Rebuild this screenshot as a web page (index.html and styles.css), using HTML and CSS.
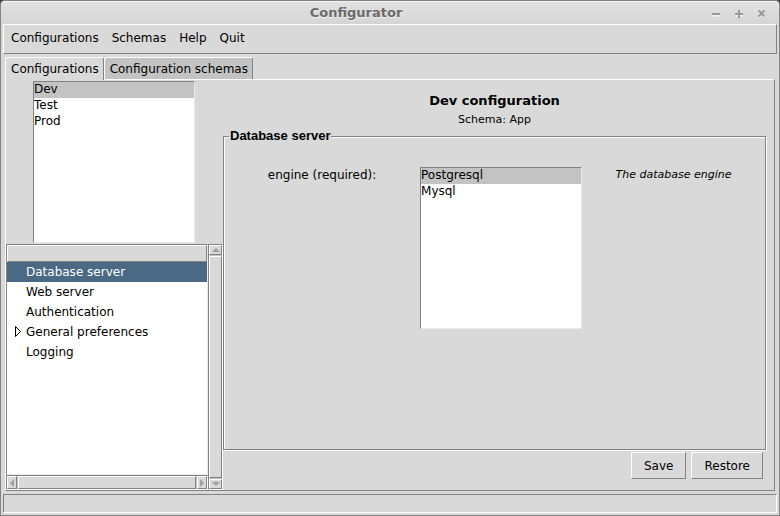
FILE: index.html
```html
<!DOCTYPE html>
<html lang="en">
<head>
<meta charset="utf-8">
<title>Configurator</title>
<link rel="stylesheet" href="styles.css">
</head>
<body>
<div class="window">
  <header class="titlebar">
    <h1 class="window-title">Configurator</h1>
    <div class="window-controls">
      <button type="button" class="window-button" aria-label="Minimize"><svg width="9" height="9" viewBox="0 0 9 9"><path class="glint" d="M1 6.5h8"/><path class="mark" d="M1 5h8"/></svg></button>
      <button type="button" class="window-button" aria-label="Maximize"><svg width="9" height="9" viewBox="0 0 9 9"><path class="glint" d="M1 6.5h8M5 2v7"/><path class="mark" d="M1 5h8M5 1v8"/></svg></button>
      <button type="button" class="window-button" aria-label="Close"><svg width="9" height="9" viewBox="0 0 9 9"><path class="glint" d="M1.5 2.5l6 6M7.5 2.5l-6 6"/><path class="mark" d="M1.5 1.5l6 6M7.5 1.5l-6 6"/></svg></button>
    </div>
  </header>

  <nav class="menubar">
    <button type="button" class="menu">Configurations</button>
    <button type="button" class="menu">Schemas</button>
    <button type="button" class="menu">Help</button>
    <button type="button" class="menu">Quit</button>
  </nav>

  <main class="notebook">
    <div class="tabs" role="tablist">
      <button type="button" class="tab tab-active" role="tab" aria-selected="true">Configurations</button>
      <button type="button" class="tab" role="tab" aria-selected="false">Configuration schemas</button>
    </div>
    <div class="page" role="tabpanel">
      <aside class="sidebar">
        <select class="listbox" size="10" aria-label="Configurations">
          <option selected>Dev</option>
          <option>Test</option>
          <option>Prod</option>
        </select>
        <div class="tree-area">
          <div class="tree">
            <div class="tree-heading"></div>
            <ul class="tree-rows" role="tree">
              <li class="tree-row tree-row-selected" role="treeitem" aria-selected="true">Database server</li>
              <li class="tree-row" role="treeitem">Web server</li>
              <li class="tree-row" role="treeitem">Authentication</li>
              <li class="tree-row" role="treeitem" aria-expanded="false"><svg class="expander" width="7" height="12" viewBox="0 0 7 12"><path d="M.5 .5v10l5-5z"/></svg>General preferences</li>
              <li class="tree-row" role="treeitem">Logging</li>
            </ul>
          </div>
          <div class="scrollbar scrollbar-vertical">
            <button type="button" class="arrow" aria-label="Scroll up"><svg width="8" height="4" viewBox="0 0 8 4"><path d="M0 4l4-4 4 4z"/></svg></button>
            <div class="thumb"></div>
            <button type="button" class="arrow" aria-label="Scroll down"><svg width="8" height="4" viewBox="0 0 8 4"><path d="M0 0h8l-4 4z"/></svg></button>
          </div>
          <div class="scrollbar">
            <button type="button" class="arrow" aria-label="Scroll left"><svg width="4" height="8" viewBox="0 0 4 8"><path d="M4 0v8l-4-4z"/></svg></button>
            <div class="thumb"></div>
            <button type="button" class="arrow" aria-label="Scroll right"><svg width="4" height="8" viewBox="0 0 4 8"><path d="M0 0l4 4-4 4z"/></svg></button>
          </div>
        </div>
      </aside>

      <form class="editor">
        <h2 class="editor-title">Dev configuration</h2>
        <p class="editor-schema">Schema: App</p>
        <fieldset class="section">
          <legend class="section-title">Database server</legend>
          <div class="field">
            <label class="field-label" for="engine">engine (required):</label>
            <select class="listbox" id="engine" size="10">
              <option selected>Postgresql</option>
              <option>Mysql</option>
            </select>
            <p class="field-help">The database engine</p>
          </div>
        </fieldset>
        <div class="actions">
          <button type="button" class="button">Save</button>
          <button type="button" class="button">Restore</button>
        </div>
      </form>
    </div>
  </main>

  <footer class="statusbar"></footer>
</div>
</body>
</html>
```

FILE: styles.css
```css
:root {
  --face: #d9d9d9;
  --shade: #828282;
  --light: #fff;
  --pick: #c3c3c3;
  --raised: var(--light) var(--shade) var(--shade) var(--light);
  --sunken: var(--shade) var(--light) var(--light) var(--shade);
}

* {
  box-sizing: border-box;
}

body {
  margin: 0;
  background: #4a4a4a;
  color: #000;
  font: 12px/16px "DejaVu Sans", sans-serif;
}

h1, h2, p, ul {
  margin: 0;
  padding: 0;
}

button, select {
  margin: 0;
  color: inherit;
  font: inherit;
}

svg {
  display: block;
}

.window {
  display: flex;
  flex-direction: column;
  min-height: 100vh;
  padding: 0 2px 2px;
  border: 1px solid #858585;
  border-radius: 5px 5px 0 0;
  background: var(--face);
}

.titlebar {
  display: flex;
  align-items: center;
  height: 23px;
  margin: 0 -2px;
  padding-right: 13px;
  border-top: 1px solid #f4f4f4;
  border-radius: 4px 4px 0 0;
  background: linear-gradient(#e2e2e2, #d5d5d5);
}

.window-title {
  flex: 1;
  color: #6b6b6b;
  font-size: 13px;
  line-height: 18px;
  text-align: center;
  text-shadow: 0 1px 0 #f0f0f0;
}

.window-controls {
  display: flex;
  gap: 14px;
}

.window-button {
  padding: 0;
  border: 0;
  background: none;
}

.window-button path {
  fill: none;
  stroke-width: 2;
}

.window-button .mark {
  stroke: #999;
}

.window-button .glint {
  stroke: #f2f2f2;
}

.menubar {
  display: flex;
  gap: 13px;
  padding: 5px 7px 7px;
  border: 1px solid;
  border-color: var(--raised);
}

.menu {
  padding: 0;
  border: 0;
  background: none;
}

.notebook {
  display: flex;
  flex: 1;
  flex-direction: column;
  padding: 3px 2px;
}

.tabs {
  display: flex;
}

.tab {
  height: 22px;
  padding: 2px 4px 2px 5px;
  border: 1px solid;
  border-color: var(--raised);
  border-bottom: 0;
  border-radius: 3px 3px 0 0;
  background: var(--pick);
}

.tab-active {
  z-index: 1;
  height: 23px;
  margin-bottom: -1px;
  background: var(--face);
}

.page {
  display: flex;
  flex: 1;
  border: 1px solid;
  border-color: var(--raised);
}

.sidebar {
  display: flex;
  flex-direction: column;
  align-items: center;
  width: 217px;
  padding-top: 1px;
}

.sidebar .listbox {
  margin-right: 1px;
}

.listbox {
  width: 162px;
  height: 162px;
  padding: 0;
  border: 1px solid;
  border-color: var(--shade) #ebebeb #ebebeb var(--shade);
  border-radius: 0;
  outline: 0;
  background: #fff;
  overflow: hidden;
}

.listbox option {
  min-height: 16px;
  padding: 0;
  line-height: 16px;
}

.listbox option:checked {
  background: var(--pick) linear-gradient(var(--pick), var(--pick));
  color: #000;
  -webkit-text-fill-color: #000;
}

.tree-area {
  display: grid;
  flex: 1;
  grid-template-columns: 1fr 15px;
  grid-template-rows: 1fr 15px;
  width: 100%;
  margin-top: 1px;
}

.tree {
  border: 1px solid;
  border-color: var(--shade) #ebebeb #ebebeb var(--shade);
  background: #fff;
}

.tree-heading {
  height: 17px;
  border: 1px solid;
  border-color: var(--raised);
  background: var(--face);
}

.tree-rows {
  list-style: none;
}

.tree-row {
  position: relative;
  padding-left: 19px;
  line-height: 20px;
}

.tree-row-selected {
  background: #4a6984;
  color: #fff;
}

.expander {
  position: absolute;
  top: 4px;
  left: 8px;
  fill: none;
  stroke: #000;
}

.scrollbar {
  display: flex;
  gap: 1px;
  border: 1px solid;
  border-color: var(--sunken);
  background: var(--pick);
}

.scrollbar-vertical {
  flex-direction: column;
  grid-row: 1 / span 2;
  grid-column: 2;
}

.thumb, .arrow {
  border: 1px solid;
  border-color: var(--raised);
  background: var(--face);
}

.thumb {
  flex: 1;
}

.arrow {
  display: flex;
  flex: 0 0 10px;
  align-items: center;
  justify-content: center;
  padding: 0;
  fill: #a0a0a0;
}

.editor {
  display: flex;
  flex: 1;
  flex-direction: column;
  padding: 12px 8px 11px 0;
  text-align: center;
}

.editor-title {
  font-size: 13px;
  line-height: 18px;
}

.editor-schema {
  margin-top: 2px;
  font-size: 11px;
}

.section {
  flex: 1;
  min-width: 0;
  margin: 0;
  padding: 0 0 20px;
  border: 1px solid var(--shade);
  box-shadow: 1px 1px 0 var(--light), inset 1px 1px 0 var(--light);
}

.section-title {
  margin: 0 auto 0 5px;
  padding: 0 1px;
  background: var(--face);
  font: bold 13px/16px "Liberation Sans", sans-serif;
}

.field {
  display: grid;
  grid-template-columns: 15fr 162px 14fr;
  align-items: start;
  padding-top: 23px;
}

.field-help {
  font-size: 11px;
  font-style: italic;
}

.actions {
  display: flex;
  justify-content: flex-end;
  gap: 5px;
  margin-top: 2px;
  padding-right: 3px;
}

.button {
  padding: 5px 12px 4px;
  border: 1px solid;
  border-color: var(--raised);
  background: var(--face);
}

.statusbar {
  height: 19px;
  border: 1px solid;
  border-color: var(--sunken);
}
```
